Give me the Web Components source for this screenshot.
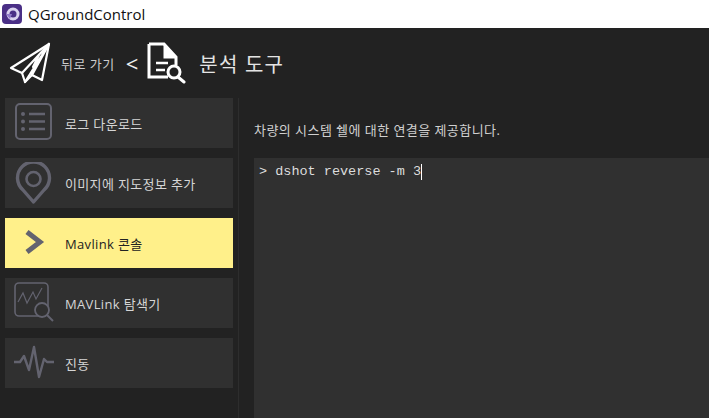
<!DOCTYPE html>
<html>
<head>
<meta charset="utf-8">
<style>
html, body { margin: 0; height: 100%; overflow: hidden; background: #222; }
body { font-family: "Open Sans", "Noto Sans CJK KR", sans-serif; }
</style>
</head>
<body>
<qgc-app>
  <qgc-titlebar slot="title">QGroundControl</qgc-titlebar>
  <qgc-toolbar slot="toolbar"></qgc-toolbar>
  <qgc-nav slot="nav">
    <qgc-navitem icon="list">로그 다운로드</qgc-navitem>
    <qgc-navitem icon="pin">이미지에 지도정보 추가</qgc-navitem>
    <qgc-navitem icon="chevron" active>Mavlink 콘솔</qgc-navitem>
    <qgc-navitem icon="chart">MAVLink 탐색기</qgc-navitem>
    <qgc-navitem icon="wave">진동</qgc-navitem>
  </qgc-nav>
  <qgc-console slot="main" intro="차량의 시스템 쉘에 대한 연결을 제공합니다.">&gt; dshot reverse -m 3</qgc-console>
</qgc-app>

<script>
class QgcApp extends HTMLElement {
  constructor() {
    super();
    this.attachShadow({ mode: 'open' }).innerHTML = `
      <style>
        :host { display: grid; grid-template-columns: 239px 1fr; grid-template-rows: 28px 70px 1fr; height: 418px; background: #222; }
        .top { grid-column: 1 / 3; }
      </style>
      <div class="top"><slot name="title"></slot></div>
      <div class="top"><slot name="toolbar"></slot></div>
      <slot name="nav"></slot>
      <slot name="main"></slot>`;
  }
}
customElements.define('qgc-app', QgcApp);

class QgcTitlebar extends HTMLElement {
  constructor() {
    super();
    this.attachShadow({ mode: 'open' }).innerHTML = `
      <style>
        :host { display: flex; align-items: center; gap: 6px; height: 28px; padding-left: 2px; background: #fff; color: #111; font: 15px "Open Sans", sans-serif; box-sizing: border-box; }
        svg { display: block; }
      </style>
      <svg width="20" height="20" viewBox="0 0 20 20">
        <rect width="20" height="20" rx="4" fill="#4a2f86"/>
        <circle cx="11" cy="10" r="5" fill="none" stroke="#d9d2ee" stroke-width="3"/>
        <path d="M4 10h6l-2 5z" fill="#8f79c9"/>
      </svg>
      <slot></slot>`;
  }
}
customElements.define('qgc-titlebar', QgcTitlebar);

class QgcToolbar extends HTMLElement {
  constructor() {
    super();
    this.attachShadow({ mode: 'open' }).innerHTML = `
      <style>
        :host { display: flex; align-items: center; height: 70px; padding-left: 9px; box-sizing: border-box; background: #222; color: #ddd; font-family: "Open Sans", "Noto Sans CJK KR", sans-serif; }
        svg { display: block; flex: none; }
        .back { font-size: 13px; margin-left: 10px; letter-spacing: .5px; color: #ccc; }
        .lt { font-size: 22px; margin-left: 11px; color: #eee; line-height: 1; }
        .doc { margin-left: 9px; }
        .name { font-size: 20px; margin-left: 12px; letter-spacing: 1.2px; color: #e4e4e4; }
      </style>
      <svg width="42" height="42" viewBox="0 0 42 42" fill="none" stroke="#fff" stroke-width="2.2" stroke-linejoin="round" stroke-linecap="round">
        <path d="M40 2 2 26l11 5 3 9 7-7 10 5z"/>
        <path d="M40 2 13 31M40 2 16 40M40 2 23 33M30 13 24 25"/>
      </svg>
      <span class="back">뒤로 가기</span>
      <span class="lt">&lt;</span>
      <svg class="doc" width="40" height="42" viewBox="0 0 40 42" fill="none" stroke="#fff" stroke-width="3">
        <path d="M2 2h15l12 13v8M2 2v33h19" stroke-linejoin="miter"/>
        <path d="M18 3v12h11" fill="#fff"/>
        <path d="M9 21h12M9 28h9" stroke-width="2.5"/>
        <circle cx="27" cy="30" r="6"/>
        <path d="M31 35l6 5" stroke-linecap="round"/>
      </svg>
      <span class="name">분석 도구</span>`;
  }
}
customElements.define('qgc-toolbar', QgcToolbar);

class QgcNav extends HTMLElement {
  constructor() {
    super();
    this.attachShadow({ mode: 'open' }).innerHTML = `
      <style>
        :host { display: flex; flex-direction: column; gap: 10px; padding: 0 5px; border-right: 1px solid #2d2d2d; box-sizing: border-box; width: 239px; height: 320px; }
      </style>
      <slot></slot>`;
  }
}
customElements.define('qgc-nav', QgcNav);

const NAV_ICONS = {
  list: `<rect x="2" y="2" width="35" height="35" rx="4" fill="none" stroke-width="2"/>
         <circle cx="9" cy="12" r="2" fill="currentColor" stroke="none"/><circle cx="9" cy="19.5" r="2" fill="currentColor" stroke="none"/><circle cx="9" cy="27" r="2" fill="currentColor" stroke="none"/>
         <path d="M15 12h16M15 19.5h16M15 27h16" stroke-width="2.4"/>`,
  pin: `<path d="M19.5 40 9 28a16 16 0 1 1 21 0z" fill="none" stroke-width="3.4" stroke-linejoin="round"/>
        <circle cx="19.5" cy="17" r="7" fill="none" stroke-width="2.6"/>`,
  chevron: `<path d="M13 10 26 20 13 30" fill="none" stroke-width="5"/>`,
  chart: `<rect x="1" y="1" width="33" height="33" rx="4" fill="none" stroke-width="1.6"/>
          <path d="M4 20 9 11l4 10 6-11 3 7 6-11" fill="none" stroke-width="1.2"/>
          <circle cx="28" cy="28" r="7" fill="#303030" stroke-width="1.8"/>
          <path d="M33 33l6 6" stroke-width="2"/>`,
  wave: `<path d="M0 20h6l4-6 5 14 5-23 5 30 5-18 3 3h7" fill="none" stroke-width="2.4" stroke-linejoin="round"/>`
};

class QgcNavitem extends HTMLElement {
  static get observedAttributes() { return ['icon', 'active']; }
  constructor() {
    super();
    this.attachShadow({ mode: 'open' });
  }
  attributeChangedCallback() { this.render(); }
  connectedCallback() { this.render(); }
  render() {
    const icon = NAV_ICONS[this.getAttribute('icon')] || '';
    this.shadowRoot.innerHTML = `
      <style>
        :host { display: flex; align-items: center; height: 50px; background: #303030; color: #d6d6d6; font: 13px "Open Sans", "Noto Sans CJK KR", sans-serif; letter-spacing: .35px; }
        :host([active]) { background: #fff08a; color: #222; }
        .ic { width: 60px; flex: none; display: flex; justify-content: center; color: #63636f; }
        svg { display: block; stroke: currentColor; }
      </style>
      <div class="ic"><svg width="42" height="42" viewBox="0 0 42 42">${icon}</svg></div>
      <slot></slot>`;
  }
}
customElements.define('qgc-navitem', QgcNavitem);

class QgcConsole extends HTMLElement {
  static get observedAttributes() { return ['intro']; }
  constructor() {
    super();
    this.attachShadow({ mode: 'open' });
  }
  attributeChangedCallback() { this.render(); }
  connectedCallback() { this.render(); }
  render() {
    this.shadowRoot.innerHTML = `
      <style>
        :host { display: flex; flex-direction: column; padding: 22px 0 0 15px; min-width: 0; box-sizing: border-box; height: 320px; }
        p { margin: 0; height: 38px; font: 13px "Open Sans", "Noto Sans CJK KR", sans-serif; letter-spacing: .45px; color: #d0d0d0; }
        .term { flex: 1; background: #303030; padding: 6px 5px; color: #ddd; font: 13.5px/16px "Liberation Mono", monospace; }
        .caret { display: inline-block; width: 1px; height: 16px; background: #fff; vertical-align: top; }
      </style>
      <p>${this.getAttribute('intro') || ''}</p>
      <div class="term"><slot></slot><span class="caret"></span></div>`;
  }
}
customElements.define('qgc-console', QgcConsole);
</script>
</body>
</html>
